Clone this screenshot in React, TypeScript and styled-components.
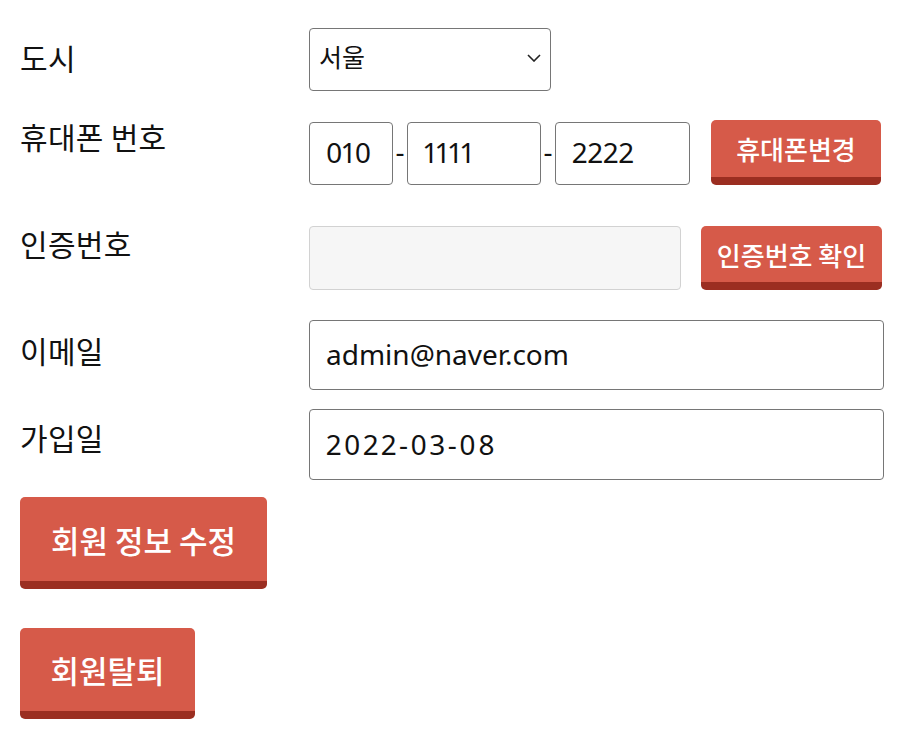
import React from "react";
import styled, { createGlobalStyle } from "styled-components";

const GlobalStyle = createGlobalStyle`
  body {
    margin: 0;
    background: #ffffff;
    font-family: "Noto Sans CJK KR", "Noto Sans", sans-serif;
    color: #111111;
  }
`;

const Page = styled.div`
  padding: 28px 20px 0 20px;
`;

const Row = styled.div<{ $mb: number }>`
  display: flex;
  align-items: flex-start;
  margin-bottom: ${(p) => p.$mb}px;
`;

const Label = styled.div<{ $top: number }>`
  width: 289px;
  flex-shrink: 0;
  font-size: 30px;
  line-height: 30px;
  padding-top: ${(p) => p.$top}px;
  letter-spacing: 0.3px;
`;

const SelectWrap = styled.div`
  position: relative;
  width: 242px;
  height: 63px;
`;

const Select = styled.select`
  appearance: none;
  width: 100%;
  height: 100%;
  box-sizing: border-box;
  border: 1px solid #767676;
  border-radius: 4px;
  background: #fff;
  padding: 0 0 8px 9px;
  font-family: "Noto Sans CJK KR", sans-serif;
  font-size: 25px;
  color: #111;
`;

const Chevron = styled.svg`
  position: absolute;
  right: 10px;
  top: 26px;
  pointer-events: none;
`;

const Field = styled.input<{ $w: number; $h?: number; $disabled?: boolean; $ls?: number }>`
  width: ${(p) => p.$w}px;
  height: ${(p) => p.$h ?? 63}px;
  box-sizing: border-box;
  border: 1px solid ${(p) => (p.$disabled ? "#d2d2d2" : "#767676")};
  background: ${(p) => (p.$disabled ? "#f6f6f6" : "#fff")};
  border-radius: 4px;
  padding: 0 0 2px 16px;
  font-family: "Noto Sans", "Noto Sans CJK KR", sans-serif;
  font-variant-numeric: proportional-nums;
  font-size: 28px;
  letter-spacing: ${(p) => p.$ls ?? 0}px;
  color: #111;
  outline: none;
`;

const PhoneGroup = styled.div`
  display: flex;
  align-items: center;
`;

const Dash = styled.span`
  width: 16px;
  text-align: center;
  font-family: "Noto Sans", sans-serif;
  font-size: 28px;
  line-height: 28px;
  margin: 0 -1px;
  padding-bottom: 4px;
`;

const Button = styled.button<{ $w: number; $h: number; $size: number; $ml?: number }>`
  width: ${(p) => p.$w}px;
  height: ${(p) => p.$h}px;
  margin-left: ${(p) => p.$ml ?? 0}px;
  box-sizing: border-box;
  border: none;
  border-bottom: 8px solid #9b2e21;
  border-radius: 5px;
  background: #d65a49;
  color: #ffffff;
  font-family: "Noto Sans CJK KR", sans-serif;
  font-size: ${(p) => p.$size}px;
  font-weight: 500;
  padding: 0;
  cursor: pointer;
`;

const ButtonRow = styled.div<{ $mb: number }>`
  margin-bottom: ${(p) => p.$mb}px;
`;

export default function App() {
  return (
    <Page>
      <GlobalStyle />
      <Row $mb={30}>
        <Label $top={14}>도시</Label>
        <SelectWrap>
          <Select defaultValue="서울">
            <option>서울</option>
            <option>부산</option>
          </Select>
          <Chevron width="14" height="8" viewBox="0 0 14 8">
            <path d="M1 1 L7 7 L13 1" fill="none" stroke="#222" strokeWidth="1.6" />
          </Chevron>
        </SelectWrap>
      </Row>
      <Row $mb={41}>
        <Label $top={0}>휴대폰 번호</Label>
        <PhoneGroup>
          <Field $w={84} defaultValue="010" />
          <Dash>-</Dash>
          <Field $w={134} defaultValue="1111" />
          <Dash>-</Dash>
          <Field $w={135} defaultValue="2222" />
          <Button $w={170} $h={65} $size={26} $ml={21} style={{ marginTop: -1 }}>
            휴대폰변경
          </Button>
        </PhoneGroup>
      </Row>
      <Row $mb={30}>
        <Label $top={2}>인증번호</Label>
        <PhoneGroup>
          <Field $w={372} $h={64} $disabled readOnly />
          <Button $w={181} $h={64} $size={26} $ml={20}>
            인증번호 확인
          </Button>
        </PhoneGroup>
      </Row>
      <Row $mb={19}>
        <Label $top={15}>이메일</Label>
        <Field $w={575} $h={70} defaultValue="admin@naver.com" />
      </Row>
      <Row $mb={17}>
        <Label $top={13}>가입일</Label>
        <Field $w={575} $h={71} $ls={2.5} defaultValue="2022-03-08" />
      </Row>
      <ButtonRow $mb={39}>
        <Button $w={247} $h={92} $size={31}>
          회원 정보 수정
        </Button>
      </ButtonRow>
      <ButtonRow $mb={0}>
        <Button $w={175} $h={91} $size={31}>
          회원탈퇴
        </Button>
      </ButtonRow>
    </Page>
  );
}
